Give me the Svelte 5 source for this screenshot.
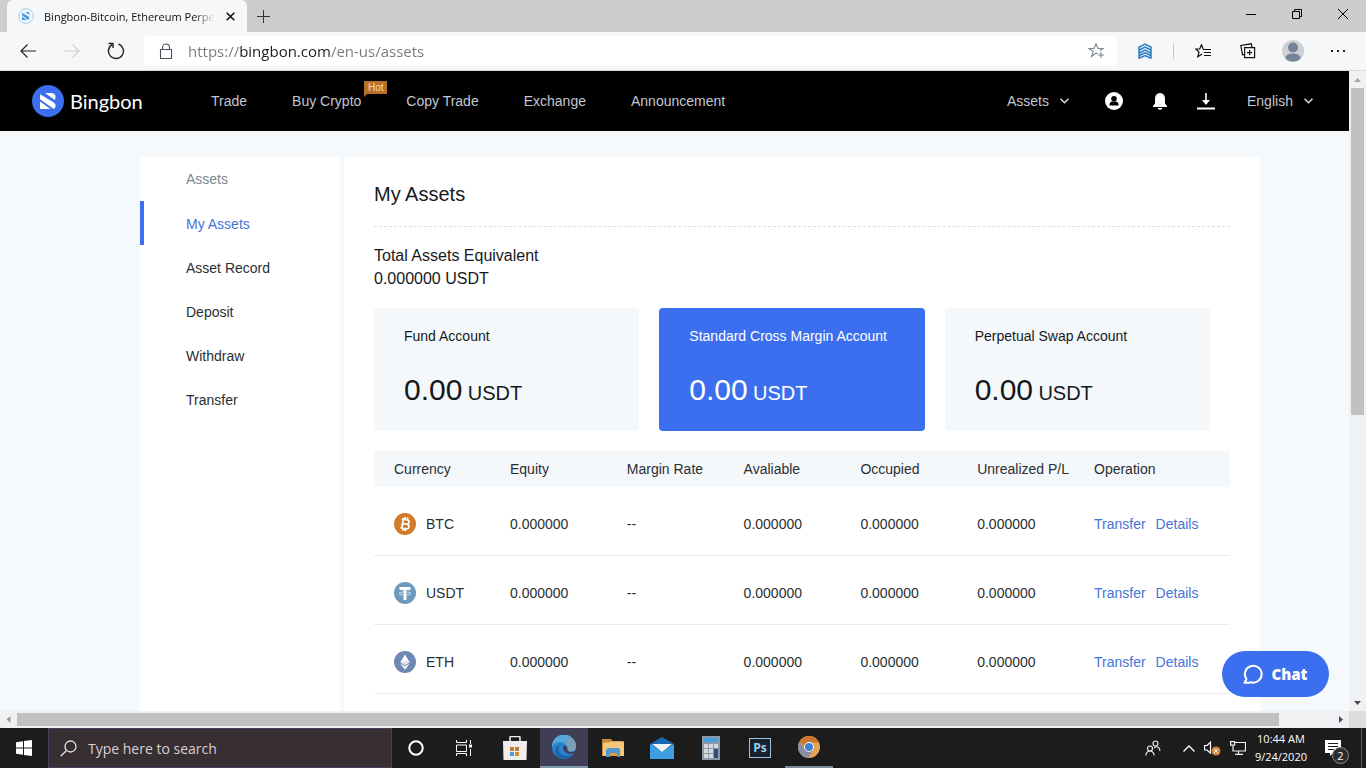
<script>
  const navLinks = [
    { label: 'Trade' },
    { label: 'Buy Crypto', hot: true },
    { label: 'Copy Trade' },
    { label: 'Exchange' },
    { label: 'Announcement' },
  ];

  const sideLinks = ['My Assets', 'Asset Record', 'Deposit', 'Withdraw', 'Transfer'];
  let activeLink = 'My Assets';

  const accounts = ['Fund Account', 'Standard Cross Margin Account', 'Perpetual Swap Account'];
  let activeAccount = 'Standard Cross Margin Account';

  const columns = ['Currency', 'Equity', 'Margin Rate', 'Avaliable', 'Occupied', 'Unrealized P/L', 'Operation'];
  const currencies = ['BTC', 'USDT', 'ETH'];

  let url = 'https://bingbon.com/en-us/assets';
  let search = '';
</script>

<div class="screen">
  <div class="titlebar">
    <div class="tab">
      <svg class="favicon" width="16" height="16" viewBox="0 0 16 16">
        <circle cx="8" cy="8" r="7.3" fill="#f2f8fd" stroke="#9fcdf0" />
        <path d="M7 4h2.500q2.500 0 2 3zM4 4.800l6.500 3.700q1.500 1.300.5 2.700l-1 .5L4 7.200zM4 8.500l5 3.500H4z" fill="#4a9be0" />
      </svg>
      <span class="tab-title">Bingbon-Bitcoin, Ethereum Perpe</span>
      <button class="tab-close" aria-label="Close tab">
        <svg width="9" height="9" viewBox="0 0 9 9"><path d="M.7.7l7.600 7.600M8.300.7L.7 8.300" stroke="#111" stroke-width="1.600" /></svg>
      </button>
    </div>
    <button class="new-tab" aria-label="New tab">
      <svg width="13" height="13" viewBox="0 0 13 13"><path d="M6.500 0v13M0 6.500h13" stroke="#333" /></svg>
    </button>
    <div class="window-buttons">
      <button aria-label="Minimize"><svg width="10" height="10" viewBox="0 0 10 10"><path d="M0 5.500h10" stroke="#000" /></svg></button>
      <button aria-label="Restore">
        <svg width="10" height="10" viewBox="0 0 10 10" fill="none" stroke="#000"><path d="M.5 2.500h7v7h-7zM2.500 2.500v-2h7v7h-2" /></svg>
      </button>
      <button aria-label="Close window"><svg width="10" height="10" viewBox="0 0 10 10"><path d="M0 0l10 10M10 0L0 10" stroke="#000" /></svg></button>
    </div>
  </div>

  <div class="toolbar">
    <div class="history">
      <button aria-label="Back">
        <svg width="16" height="14" viewBox="0 0 16 14" fill="none" stroke="#222" stroke-width="1.200"><path d="M16 7H1M7.500.5L1 7l6.500 6.500" /></svg>
      </button>
      <button aria-label="Forward">
        <svg width="16" height="14" viewBox="0 0 16 14" fill="none" stroke="#cdd0d2" stroke-width="1.200"><path d="M0 7h15M8.500.5L15 7l-6.500 6.500" /></svg>
      </button>
      <button aria-label="Refresh">
        <svg width="18" height="18" viewBox="0 0 18 18" fill="none" stroke="#222" stroke-width="1.400"><path d="M11.500 2A7.500 7.500 0 1 1 5 2.700M1.500 1.500H6V6" /></svg>
      </button>
    </div>
    <div class="address">
      <svg width="14" height="17" viewBox="0 0 14 17" fill="none" stroke="#4a4f5c" stroke-width="1.100"><path d="M1.500 6.500h11v9h-11zM3.500 6.500V4.500a3.500 3.500 0 0 1 7 0v2" /></svg>
      <input class="url" aria-label="Address" bind:value={url} />
      <svg width="17" height="16" viewBox="0 0 17 16" fill="none" stroke="#7d8794" stroke-width="1.100"><path d="M9.500 11L8 10l-4.500 3.500 1.700-5.300L1 5.500h5L8 .8l2 4.700h5l-3 2.300M13 9v6M10 12h6" /></svg>
    </div>
    <button aria-label="Extension">
      <svg width="14" height="16" viewBox="0 0 14 16" fill="none" stroke="#2c7cc0" stroke-width="1.500"><path d="M.5 4.500L7 1l6.500 3.500M.5 7.500L7 4l6.500 3.500M.5 10.500L7 7l6.500 3.500M.5 13L7 9.800l6.500 3.200M.5 15.500L7 12.500l6.500 3M1 4v11M13 4v11" /></svg>
    </button>
    <span class="divider"></span>
    <button aria-label="Favorites">
      <svg width="16" height="14" viewBox="0 0 16 14" fill="none" stroke="#111" stroke-width="1.200"><path d="M8 5.500h8M9 8.500h7M9 11.500h7M8.200 5L6.500.8 4.700 5H.8l3.200 3-1.200 4.800L7 10" /></svg>
    </button>
    <button aria-label="Collections">
      <svg width="16" height="16" viewBox="0 0 16 16" fill="none" stroke="#111" stroke-width="1.200"><path d="M4.600 4.600h10v10h-10zM9.600 7v5.200M7 9.600h5.200M12 4.200L11.300.8.8 2.500l1.700 9.200 1.800-.3" /></svg>
    </button>
    <button aria-label="Profile">
      <svg width="22" height="22" viewBox="0 0 22 22"><circle cx="11" cy="11" r="11" fill="#cfd0d2" /><circle cx="11" cy="7.500" r="5" fill="#73819a" /><ellipse cx="11" cy="17.500" rx="7.500" ry="4" fill="#75839a" /></svg>
    </button>
    <button aria-label="Settings and more">
      <svg width="14" height="2" viewBox="0 0 14 2" fill="#222"><path d="M0 0h2v2H0zM6 0h2v2H6zM12 0h2v2h-2z" /></svg>
    </button>
  </div>

  <div class="viewport">
    <div class="page">
      <header>
        <a class="brand" href="#home">
          <svg width="32" height="32" viewBox="0 0 32 32">
            <circle cx="16" cy="16" r="16" fill="#3c6ff0" />
            <path d="M13 8h6q4.500 0 4.500 4 0 2-.8 3zM8 9.300l13 7.700q3.200 2.200 2.500 4.700-.5 1.800-2 2.100L8 14.200zM8 16.500L18.500 24H8z" fill="#fff" />
          </svg>
          <span>Bingbon</span>
        </a>
        <nav>
          {#each navLinks as link}
            <a href="#nav">{link.label}{#if link.hot}<span class="hot">Hot</span>{/if}</a>
          {/each}
        </nav>
        <div class="user-menu">
          <button class="menu">
            Assets
            <svg width="9" height="6" viewBox="0 0 9 6" fill="none" stroke="#d5d8e0" stroke-width="1.500"><path d="M.5.7l4 4 4-4" /></svg>
          </button>
          <button aria-label="Account">
            <svg width="18" height="18" viewBox="0 0 18 18"><circle cx="9" cy="9" r="9" fill="#fff" /><circle cx="9" cy="6.700" r="2.800" /><path d="M4.500 13.500V12Q4.500 10 7 9.500h4q2.500.5 2.500 2.500v1.500z" /></svg>
          </button>
          <button aria-label="Notifications">
            <svg width="16" height="18" viewBox="0 0 16 18" fill="#fff"><path d="M8 1q5 .5 5 6v4.500l2 2.500v1H1v-1l2-2.500V7q0-5.500 5-6zM5.500 16h5q-.5 1.700-2.500 1.700T5.500 16z" /></svg>
          </button>
          <button aria-label="Download">
            <svg width="18" height="17" viewBox="0 0 18 17" fill="#fff"><path d="M8.200 0h1.600v7h3.200l-4 5-4-5h3.200zM0 14.500h18v2H0z" /></svg>
          </button>
          <label class="menu language">
            <select aria-label="Language"><option>English</option></select>
            <svg width="9" height="6" viewBox="0 0 9 6" fill="none" stroke="#d5d8e0" stroke-width="1.500"><path d="M.5.7l4 4 4-4" /></svg>
          </label>
        </div>
      </header>

      <div class="content">
        <aside>
          <span class="side-heading">Assets</span>
          {#each sideLinks as link}
            <a href="#side" class={link === activeLink ? 'active' : ''} on:click={() => (activeLink = link)}>{link}</a>
          {/each}
        </aside>

        <main>
          <h1>My Assets</h1>
          <div class="total">
            <div>Total Assets Equivalent</div>
            <div>0.000000 USDT</div>
          </div>
          <div class="accounts">
            {#each accounts as account}
              <button class="account {account === activeAccount ? 'account-active' : ''}" on:click={() => (activeAccount = account)}>
                <span class="account-name">{account}</span>
                <span class="amount">0.00 <small>USDT</small></span>
              </button>
            {/each}
          </div>

          <table>
            <thead>
              <tr>
                {#each columns as column}<th>{column}</th>{/each}
              </tr>
            </thead>
            <tbody>
              {#each currencies as currency}
                <tr>
                  <td>
                    <div class="currency">
                      <svg width="22" height="22" viewBox="0 0 22 22">
                        {#if currency === 'BTC'}
                          <circle cx="11" cy="11" r="11" fill="#d07c2c" />
                          <g transform="rotate(10 11 11)" fill="none" stroke="#fff" stroke-width="1.700"><path d="M7 6.500h5.500a2.200 2.200 0 0 1 0 4.400H8.500M8.500 6.500v9M8.500 10.900h4.500a2.300 2.300 0 0 1 0 4.600H7M10 4v2.500M12.500 4v2.500M10 15.500V18M12.500 15.500V18" /></g>
                        {:else if currency === 'USDT'}
                          <circle cx="11" cy="11" r="11" fill="#6c9abc" />
                          <path d="M5.500 5h11v3h-4v10h-3V8h-4z" fill="#fff" />
                          <path d="M9 10q-4 .3-4 1.500T9 13M13 10q4 .3 4 1.500T13 13" fill="none" stroke="#e8f1f6" stroke-width=".8" />
                        {:else}
                          <circle cx="11" cy="11" r="11" fill="#6f87b3" />
                          <path d="M11 3.500l4.700 7.700L11 14l-4.700-2.800zM6.300 12.400L11 15.200l4.700-2.800L11 18.800z" fill="#fff" />
                          <path d="M11 9l4.700 2.200L11 14l-4.700-2.800z" fill="#e4e4f2" />
                        {/if}
                      </svg>
                      {currency}
                    </div>
                  </td>
                  <td>0.000000</td>
                  <td>--</td>
                  <td>0.000000</td>
                  <td>0.000000</td>
                  <td>0.000000</td>
                  <td><div class="operations"><a href="#transfer">Transfer</a><a href="#details">Details</a></div></td>
                </tr>
              {/each}
            </tbody>
          </table>
        </main>
      </div>

      <button class="chat">
        <svg width="20" height="20" viewBox="0 0 20 20" fill="none" stroke="#fff" stroke-width="2"><path d="M1.500 18.800l2-3.600A8.400 8.400 0 1 1 8 18.300q-3 .7-6.500.5z" stroke-linejoin="round" /></svg>
        Chat
      </button>
    </div>

    <div class="scroll-y">
      <svg width="17" height="17" viewBox="0 0 17 17"><path d="M5 11l3.500-4L12 11z" fill="#a3a3a3" /></svg>
      <div class="track"><div class="thumb"></div></div>
      <svg width="17" height="17" viewBox="0 0 17 17"><path d="M5 7l3.500 4L12 7z" fill="#4a4560" /></svg>
    </div>
  </div>

  <div class="scroll-x">
    <svg width="17" height="17" viewBox="0 0 17 17"><path d="M10.500 5l-4 3.500 4 3.500z" fill="#9a9a9a" /></svg>
    <div class="track"><div class="thumb"></div></div>
    <svg width="17" height="17" viewBox="0 0 17 17"><path d="M7 5l4 3.500L7 12z" fill="#4a4560" /></svg>
    <div class="corner"></div>
  </div>

  <div class="taskbar">
    <button aria-label="Start">
      <svg width="16" height="16" viewBox="0 0 16 16" fill="#fff"><path d="M0 2.300L7 1.300v6.200H0zM8 1.100L16 0v7.500H8zM0 8.500h7v6.200l-7-1zM8 8.500h8V16l-8-1.100z" /></svg>
    </button>
    <label class="search">
      <svg width="17" height="17" viewBox="0 0 17 17" fill="none" stroke="#e5e0e2" stroke-width="1.300"><circle cx="10.500" cy="6.500" r="5.500" /><path d="M6.500 10.500L.7 16.300" /></svg>
      <input placeholder="Type here to search" bind:value={search} />
    </label>
    <button aria-label="Cortana">
      <svg width="16" height="16" viewBox="0 0 16 16"><circle cx="8" cy="8" r="6.700" fill="none" stroke="#fff" stroke-width="2" /></svg>
    </button>
    <button aria-label="Task view">
      <svg width="16" height="16" viewBox="0 0 16 16" fill="none" stroke="#fff"><path d="M.5 0v2.500h10V0M.5 5h10v6.500H.5zM.5 16v-2.500h10V16M14.500 0v4M14.500 9v7" /><path d="M13 4.500h3v3h-3z" fill="#fff" stroke="none" /></svg>
    </button>
    <div class="apps">
      <button aria-label="Store">
        <svg width="24" height="24" viewBox="0 0 24 24"><path d="M7 6V1.500q0-1 1-1h8q1 0 1 1V6" fill="none" stroke="#eee" stroke-width="1.500" /><path d="M0 5h24l-.5 19H.5z" fill="#f0eeec" /><path d="M7 11h4v4H7zM12 11h4v4h-4z" fill="#c97a38" /><path d="M7 16h4v4H7z" fill="#4aa0de" /><path d="M12 16h4v4h-4z" fill="#d58a34" /></svg>
      </button>
      <button class="current" aria-label="Edge">
        <svg width="24" height="24" viewBox="0 0 24 24"><circle cx="12" cy="12" r="12" fill="#2b83ca" /><path d="M0 12A12 12 0 0 1 24 11q0 5-5 5.500-5 0-4-3Q15 7 8 7 2 7.500 0 12z" fill="#57a9dc" /><path d="M16 1q8 3.500 8 10 0 5-5 5.500-5 0-4-3 1.500-3-1-6z" fill="#7d9db5" /><path d="M9 9q-5 5 0 10 5 4 13-.5-4 5.500-10 5.500Q4 23.500 3 17q0-6 6-8z" fill="#1c65ac" /><path d="M12 10.500q-2.500 3 1 6.500 5 3.500 10 1l1 2.500 1-6q-3 3-6.500 2.500-4-.5-3-3.500 0-3-3.500-3z" fill="#403d56" /></svg>
      </button>
      <button aria-label="File Explorer">
        <svg width="22" height="20" viewBox="0 0 22 20"><path d="M0 1h9l1.500 2H21v15H0z" fill="#c98739" /><path d="M1 5l9-1.500h12V18H1z" fill="#f4c878" /><path d="M4 12q1-2 3-2h9q2 0 2 2v7h-3v-4H8v4H4z" fill="#4a9bd3" /><path d="M8 15h7v3H8z" fill="#e19942" /></svg>
      </button>
      <button aria-label="Mail">
        <svg width="24" height="22" viewBox="0 0 24 22"><path d="M0 7L12 0l12 7v15H0z" fill="#1d69b1" /><path d="M0 7l12 8 12-8v15H0z" fill="#3d9fe4" /><path d="M2 7h20l-10 8z" fill="#f1f4f6" /></svg>
      </button>
      <button aria-label="Calculator">
        <svg width="18" height="24" viewBox="0 0 18 24"><path d="M0 0h18v24H0z" fill="#8b98a7" /><path d="M2 2h14v4H2z" fill="#43a0dc" /><path d="M2 8h4v4H2zM7 8h4v4H7zM12 8h4v4h-4zM2 13h4v4H2zM7 13h4v4H7zM2 18h4v4H2zM7 18h4v4H7z" fill="#d3d9dd" /><path d="M12 13h4v9h-4z" fill="#314d75" /></svg>
      </button>
      <button aria-label="Photoshop">
        <span class="ps">Ps</span>
      </button>
      <button class="running" aria-label="Chrome">
        <svg width="22" height="22" viewBox="0 0 22 22"><circle cx="11" cy="11" r="11" fill="#e3a453" /><path d="M1.500 5.500A11 11 0 0 1 21 6.500H11q-4 0-5 4z" fill="#c9762f" /><path d="M1.500 5.500A11 11 0 0 0 10 22l4.500-7.500Q9 17 6.500 13z" fill="#8890a0" /><circle cx="11" cy="11" r="5" fill="#f4f0e8" /><circle cx="11" cy="11" r="4" fill="#3f80d8" /></svg>
      </button>
    </div>
    <div class="tray">
      <svg width="16" height="16" viewBox="0 0 16 16" fill="none" stroke="#e8e8e8" stroke-width="1.200"><circle cx="10.500" cy="3.500" r="2.500" /><path d="M9 8q5-3.500 6 3" /><circle cx="5" cy="8.500" r="2.500" /><path d="M.8 15.500Q1.500 11 5 11t4.200 4.500" /></svg>
      <svg class="tray-up" width="12" height="7" viewBox="0 0 12 7" fill="none" stroke="#fff" stroke-width="1.300"><path d="M.5 6.500L6 1l5.500 5.500" /></svg>
      <svg width="17" height="15" viewBox="0 0 17 15"><path d="M.6 4.500h2.500L6.500 1.200v11L3 9H.6z" fill="none" stroke="#fff" stroke-width="1.200" /><circle cx="12" cy="10" r="4.500" fill="#d3873a" /><path d="M10 8l4 4M14 8l-4 4" stroke="#fff" /></svg>
      <svg width="16" height="14" viewBox="0 0 16 14" fill="none" stroke="#f0f0f0" stroke-width="1.200"><path d="M4.500 1.500h11v8.500H3V5M8.500 10v3M5 13.300h8M.6.6h4v3.600h-4z" /></svg>
      <div class="clock"><span>10:44 AM</span><span>9/24/2020</span></div>
      <button class="notifications" aria-label="Notification center">
        <svg width="16" height="16" viewBox="0 0 16 16"><path d="M0 0h16v13H8l-3 3v-3H0z" fill="#fff" /><path d="M3 3.500h10M3 6.500h10M3 9.500h6" stroke="#1c1c1c" /></svg>
        <span class="count">2</span>
      </button>
    </div>
  </div>
</div>

<style>
  :global(body) {
    overflow: hidden;
  }
  .screen {
    display: flex;
    flex-direction: column;
    height: 100vh;
    font-family: 'Liberation Sans', Arial, sans-serif;
    font-size: 14px;
    color: #2a2f33;
  }
  .screen * {
    box-sizing: border-box;
  }
  a {
    color: inherit;
    text-decoration: none;
  }
  button {
    display: flex;
    align-items: center;
    justify-content: center;
    padding: 0;
    border: 0;
    background: none;
    font: inherit;
    color: inherit;
  }
  input,
  select {
    border: 0;
    padding: 0;
    outline: 0;
    background: none;
    font: inherit;
    color: inherit;
  }
  svg {
    display: block;
    flex: none;
  }

  /* browser chrome */
  .titlebar {
    display: flex;
    flex: none;
    height: 32px;
    padding-left: 7px;
    background: #cdcdcd;
    font-family: 'Open Sans', 'Noto Sans', sans-serif;
  }
  .tab {
    display: flex;
    align-items: center;
    width: 240px;
    padding: 0 11px;
    border-radius: 6px 6px 0 0;
    background: #f5f7f9;
  }
  .tab-title {
    flex: 1;
    margin-left: 10px;
    white-space: nowrap;
    font-size: 11px;
    color: #111;
    mask-image: linear-gradient(to right, #000 88%, transparent);
  }
  .tab-close {
    width: 12px;
    height: 16px;
    margin-left: 9px;
  }
  .new-tab {
    width: 32px;
  }
  .window-buttons {
    display: flex;
    margin-left: auto;
  }
  .window-buttons button {
    width: 46px;
    height: 28px;
  }
  .toolbar {
    display: flex;
    align-items: center;
    flex: none;
    height: 39px;
    padding: 0 6px;
    border-bottom: 1px solid #d6d8da;
    background: #f5f7f9;
  }
  .toolbar button {
    width: 45px;
    height: 32px;
  }
  .history {
    display: flex;
  }
  .toolbar .history button {
    width: 44px;
  }
  .address {
    display: flex;
    align-items: center;
    flex: 1;
    height: 30px;
    margin: 0 5px 0 6px;
    padding: 0 12px 0 15px;
    border-radius: 4px;
    background: #fff;
  }
  .url {
    flex: 1;
    margin-left: 15px;
    font-family: 'Open Sans', 'Noto Sans', sans-serif;
    font-size: 15px;
    color: transparent;
    background: linear-gradient(to right, #777 52px, #1c1c1c 52px, #1c1c1c 142px, #777 142px);
    background-clip: text;
  }
  .divider {
    width: 1px;
    height: 16px;
    margin: 0 6px;
    background: #c4c8cc;
  }

  /* page */
  .viewport {
    display: flex;
    flex: 1;
    min-height: 0;
  }
  .page {
    position: relative;
    flex: 1;
    min-width: 0;
    overflow: hidden;
    background: #f6f9fb;
  }
  header {
    display: flex;
    align-items: center;
    height: 60px;
    padding: 0 36px 0 32px;
    background: #000;
    color: #c3c7d2;
  }
  .brand {
    display: flex;
    align-items: center;
    gap: 6px;
    width: 179px;
    font-family: Lato, sans-serif;
    font-size: 20px;
    color: #fff;
  }
  nav {
    display: flex;
    gap: 45px;
  }
  nav a {
    position: relative;
  }
  .hot {
    position: absolute;
    left: 100%;
    bottom: 100%;
    margin: 0 0 -1px 3px;
    width: 23px;
    height: 13px;
    background: #b8712c;
    font-size: 10px;
    line-height: 13px;
    text-align: center;
    color: #f6d9a0;
  }
  .hot::after {
    content: '';
    position: absolute;
    left: 0;
    top: 100%;
    border-top: 3px solid #b8712c;
    border-right: 3px solid transparent;
  }
  .user-menu {
    display: flex;
    align-items: center;
    margin-left: auto;
    gap: 29px;
  }
  .menu {
    display: flex;
    align-items: center;
    gap: 11px;
  }
  .menu:first-child {
    margin-right: 7px;
  }
  .language {
    margin-left: 3px;
  }
  .language select {
    appearance: none;
  }
  .content {
    display: flex;
    gap: 4px;
    width: 1400px;
    padding: 26px 140px 0;
  }
  aside {
    display: flex;
    flex-direction: column;
    width: 200px;
    background: #fff;
  }
  aside a,
  .side-heading {
    height: 44px;
    padding-left: 42px;
    border-left: 4px solid transparent;
    line-height: 46px;
  }
  .side-heading {
    line-height: 44px;
    color: #7c878e;
  }
  aside .active {
    border-color: #3c6ff0;
    color: #4673d6;
  }
  main {
    flex: 1;
    padding: 0 30px 40px;
    background: #fff;
    color: #16191c;
  }
  h1 {
    margin: 0;
    height: 70px;
    border-bottom: 1px dashed #dcdfe1;
    font-size: 20px;
    font-weight: 400;
    line-height: 74px;
  }
  .total {
    padding: 17px 0 18px;
    font-size: 16px;
    line-height: 23px;
  }
  .accounts {
    display: grid;
    grid-template-columns: repeat(3, 1fr);
    gap: 20px;
    padding-right: 20px;
  }
  .account {
    flex-direction: column;
    align-items: flex-start;
    justify-content: flex-start;
    gap: 29px;
    height: 123px;
    padding: 20px 30px;
    border-radius: 4px;
    background: #f5f8fa;
    white-space: nowrap;
  }
  .account-active {
    background: #3c6ff0;
    color: #fff;
  }
  .amount {
    font-size: 30px;
  }
  small {
    margin-left: -3px;
    font-size: 20px;
  }
  table {
    width: 100%;
    margin-top: 20px;
    border-spacing: 0;
    table-layout: fixed;
    color: #2a2f33;
  }
  th {
    height: 36px;
    padding: 0;
    background: #f5f8fa;
    font-weight: 400;
    text-align: left;
    white-space: nowrap;
  }
  td {
    height: 69px;
    padding: 6px 0 0;
    border-bottom: 1px solid #e9ecee;
  }
  th:first-child,
  td:first-child {
    width: 136px;
    padding-left: 20px;
  }
  th:last-child {
    width: 136px;
  }
  .currency,
  .operations {
    display: flex;
    align-items: center;
    gap: 10px;
  }
  .operations {
    color: #4673d6;
  }
  .chat {
    position: absolute;
    right: 20px;
    bottom: 14px;
    gap: 8px;
    width: 107px;
    height: 46px;
    border-radius: 23px;
    background: #3c6ff0;
    font-family: 'Open Sans', 'Noto Sans', sans-serif;
    font-size: 15px;
    font-weight: 800;
    color: #fff;
  }

  /* scrollbars */
  .scroll-y {
    display: flex;
    flex-direction: column;
    width: 17px;
    background: #f0f1f2;
  }
  .track {
    flex: 1;
  }
  .scroll-y .thumb {
    height: 54%;
    margin: 0 2px;
    background: #c1c1c1;
  }
  .scroll-x {
    display: flex;
    flex: none;
    height: 17px;
    background: #f0f1f2;
  }
  .scroll-x .thumb {
    width: 96%;
    height: 13px;
    margin: 2px 0;
    background: #c1c1c1;
  }
  .corner {
    width: 17px;
    background: #dcdcdc;
  }

  /* taskbar */
  .taskbar {
    display: flex;
    flex: none;
    height: 40px;
    background: #1c1c1c;
    color: #fff;
    font-family: 'Open Sans', 'Noto Sans', sans-serif;
  }
  .taskbar button {
    width: 48px;
  }
  .search {
    display: flex;
    align-items: center;
    gap: 11px;
    width: 344px;
    padding: 0 11px;
    border: 1px solid #45405a;
    background: #372e32;
  }
  .search input {
    flex: 1;
    font-size: 14px;
  }
  .search input::placeholder {
    color: #d8d0d2;
  }
  .apps {
    display: flex;
    gap: 1px;
    margin-left: 3px;
  }
  .current {
    border-bottom: 2px solid #7e97ad;
    background: #403d56;
  }
  .running {
    border-bottom: 2px solid #7e8c9a;
  }
  .ps {
    width: 22px;
    height: 20px;
    border: 1px solid #9cc3e2;
    background: #18222f;
    font-size: 12px;
    font-weight: 700;
    line-height: 17px;
    color: #9fcbee;
  }
  .tray {
    display: flex;
    align-items: center;
    gap: 9px;
    margin-left: auto;
    margin-right: 4px;
    border-right: 1px solid #55606e;
  }
  .tray-up {
    margin-left: 13px;
  }
  .clock {
    display: flex;
    flex-direction: column;
    align-items: center;
    font-size: 11px;
    line-height: 18px;
  }
  .taskbar .notifications {
    position: relative;
    width: 45px;
    height: 40px;
    padding-right: 11px;
  }
  .count {
    position: absolute;
    right: 12px;
    bottom: 4px;
    width: 17px;
    height: 17px;
    border: 1px solid #8b8f96;
    border-radius: 50%;
    background: #2a2c30;
    font-size: 11px;
    line-height: 15px;
    text-align: center;
  }
</style>
